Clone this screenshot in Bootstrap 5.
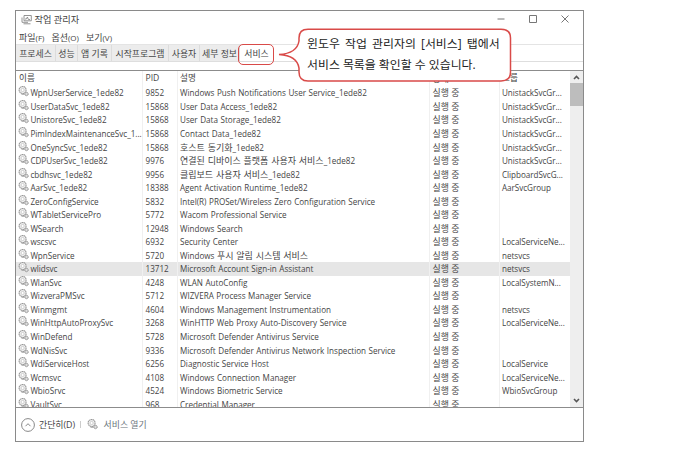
<!DOCTYPE html>
<html lang="ko">
<head>
<meta charset="utf-8">
<meta name="viewport" content="width=device-width, initial-scale=1">
<title>작업 관리자</title>
<link href="https://cdn.jsdelivr.net/npm/bootstrap@5.3.0/dist/css/bootstrap.min.css" rel="stylesheet">
<style>
body{font-family:"Open Sans","Noto Sans CJK KR",sans-serif;font-size:8.1px;line-height:13.54px;color:#444;height:455px}
.win{width:569px;height:432px;margin:10px 0 0 15px;border:1px solid #8a8a8a;white-space:nowrap}
.titlebar{height:17px;padding:0 13px 0 5px;font-size:9.2px}
.winbtns{gap:22px}
.menus{height:16px;padding:3px 0 0 3px;gap:7px;font-size:9px;line-height:13px}
.menus small{font-size:8px}
.tabstrip{height:18px;border-top:1px solid #e4e4e4;border-bottom:1px solid #dedede;font-size:8.9px;line-height:17.5px}
.tabitem{background:#ececec;border-right:1px solid #dcdcdc;text-align:center}
.tabitem.current{background:#fff;border:0}
.svclist{margin-top:8px;height:340px;border-top:1px solid #8c8c8c;border-bottom:1px solid #8c8c8c}
.svcrow{display:grid;grid-template-columns:126.5px 35px 252px 70px 1fr;height:13.54px}
.svcrow>*{border-right:1px solid #f0f0f0;padding-left:3px;overflow:hidden;height:13.54px}
.svcrow>*:last-child{border:0;padding-left:2.5px;letter-spacing:-.03px}
.svcrow.head{height:15.5px}
.svcrow.head>*{height:15.5px;line-height:15.5px;font-size:8.6px}
.svcrow.picked{background:#e6e6e6}
.svcrow:not(.head)>:first-child{display:flex;padding-left:2px}
.svcrow>:nth-child(3){word-spacing:.45px;padding-left:2.5px}
.svcrow>:nth-child(4){font-size:8.9px}
.hangul{font-size:9px;line-height:1}
.gear{width:11px;height:11px;flex:none;margin-right:1.4px}
.sbar{width:13px;background:#eee}
.thumb{height:23px;background:#bdbdbd}
.foot{height:33px;padding:0 0 0 5px;font-size:8.9px}
.split{width:1px;height:7px;background:#ccc;margin:0 6px 0 5px}
.ring{left:238px;top:44px;width:36px;height:21px;border:1.5px solid #d94a48;border-radius:5px}
.bubble{left:277px;top:27px;width:236px;height:56px}
.bubble p{left:30px;top:6px;font-size:11.9px;line-height:20.6px;color:#222;white-space:nowrap}
.l1{word-spacing:2.1px}
</style>
<script src="https://cdn.jsdelivr.net/npm/bootstrap@5.3.0/dist/js/bootstrap.bundle.min.js"></script>
</head>
<body class="bg-white overflow-hidden position-relative">
<svg class="d-none">
<symbol id="g" viewBox="0 0 11 11"><circle cx="4.6" cy="4" r="3.5" fill="#f3f3f3" stroke="#999" stroke-width="1.1" stroke-dasharray="1.5 .4"/><circle cx="4.6" cy="4" r="1.6" fill="#fff" stroke="#bbb" stroke-width=".7"/><circle cx="8.5" cy="8" r="1.7" fill="#ddd" stroke="#888" stroke-width="1" stroke-dasharray="1 .3"/><path d="M3.5 8.2h2.8" stroke="#999"/></symbol>
</svg>
<main class="win d-flex flex-column overflow-hidden">
<header class="titlebar d-flex align-items-center">
<svg width="11" height="11" viewBox="0 0 11 11" fill="none" stroke="#888" stroke-width=".9"><path d="M3 1.5h7.3v5.3H3zM1 3.5v4.8h6M2.5 9.8h7M4 5h1.4l1-2 1 2.5H9"/></svg>
<span style="margin-left:2.5px">작업 관리자</span>
<span class="winbtns d-flex ms-auto">
<svg width="10" height="10" stroke="#777"><path d="M1.500 5h7"/></svg>
<svg width="10" height="10" stroke="#777" fill="none"><path d="M1.5 1.5h7v7h-7z"/></svg>
<svg width="10" height="10" stroke="#777"><path d="M1.5 1.5l7 7m0-7l-7 7"/></svg>
</span>
</header>
<nav class="menus d-flex"><span>파일<small>(F)</small></span><span>옵션<small>(O)</small></span><span>보기<small>(V)</small></span></nav>
<nav class="tabstrip d-flex">
<span class="tabitem" style="width:40px">프로세스</span><span class="tabitem" style="width:22px">성능</span><span class="tabitem" style="width:34px">앱 기록</span><span class="tabitem" style="width:57px">시작프로그램</span><span class="tabitem" style="width:31px">사용자</span><span class="tabitem" style="width:40px">세부 정보</span><span class="tabitem current" style="width:33px">서비스</span>
</nav>
<section class="svclist d-flex overflow-hidden">
<div class="flex-grow-1">
<div class="svcrow head"><span>이름</span><span>PID</span><span>설명</span><span>상태</span><span>그룹</span></div>
<div class="svcrow"><span><svg class="gear"><use href="#g"/></svg>WpnUserService_1ede82</span><span>9852</span><span>Windows Push Notifications User Service_1ede82</span><span>실행 중</span><span>UnistackSvcGr...</span></div>
<div class="svcrow"><span><svg class="gear"><use href="#g"/></svg>UserDataSvc_1ede82</span><span>15868</span><span>User Data Access_1ede82</span><span>실행 중</span><span>UnistackSvcGr...</span></div>
<div class="svcrow"><span><svg class="gear"><use href="#g"/></svg>UnistoreSvc_1ede82</span><span>15868</span><span>User Data Storage_1ede82</span><span>실행 중</span><span>UnistackSvcGr...</span></div>
<div class="svcrow"><span><svg class="gear"><use href="#g"/></svg>PimIndexMaintenanceSvc_1...</span><span>15868</span><span>Contact Data_1ede82</span><span>실행 중</span><span>UnistackSvcGr...</span></div>
<div class="svcrow"><span><svg class="gear"><use href="#g"/></svg>OneSyncSvc_1ede82</span><span>15868</span><span><span class="hangul">호스트 동기화</span>_1ede82</span><span>실행 중</span><span>UnistackSvcGr...</span></div>
<div class="svcrow"><span><svg class="gear"><use href="#g"/></svg>CDPUserSvc_1ede82</span><span>9976</span><span><span class="hangul">연결된 디바이스 플랫폼 사용자 서비스</span>_1ede82</span><span>실행 중</span><span>UnistackSvcGr...</span></div>
<div class="svcrow"><span><svg class="gear"><use href="#g"/></svg>cbdhsvc_1ede82</span><span>9956</span><span><span class="hangul">클립보드 사용자 서비스</span>_1ede82</span><span>실행 중</span><span>ClipboardSvcG...</span></div>
<div class="svcrow"><span><svg class="gear"><use href="#g"/></svg>AarSvc_1ede82</span><span>18388</span><span>Agent Activation Runtime_1ede82</span><span>실행 중</span><span>AarSvcGroup</span></div>
<div class="svcrow"><span><svg class="gear"><use href="#g"/></svg>ZeroConfigService</span><span>5832</span><span>Intel(R) PROSet/Wireless Zero Configuration Service</span><span>실행 중</span><span></span></div>
<div class="svcrow"><span><svg class="gear"><use href="#g"/></svg>WTabletServicePro</span><span>5772</span><span>Wacom Professional Service</span><span>실행 중</span><span></span></div>
<div class="svcrow"><span><svg class="gear"><use href="#g"/></svg>WSearch</span><span>12948</span><span>Windows Search</span><span>실행 중</span><span></span></div>
<div class="svcrow"><span><svg class="gear"><use href="#g"/></svg>wscsvc</span><span>6932</span><span>Security Center</span><span>실행 중</span><span>LocalServiceNe...</span></div>
<div class="svcrow"><span><svg class="gear"><use href="#g"/></svg>WpnService</span><span>5720</span><span>Windows <span class="hangul">푸시 알림 시스템 서비스</span></span><span>실행 중</span><span>netsvcs</span></div>
<div class="svcrow picked"><span><svg class="gear"><use href="#g"/></svg>wlidsvc</span><span>13712</span><span>Microsoft Account Sign-in Assistant</span><span>실행 중</span><span>netsvcs</span></div>
<div class="svcrow"><span><svg class="gear"><use href="#g"/></svg>WlanSvc</span><span>4248</span><span>WLAN AutoConfig</span><span>실행 중</span><span>LocalSystemN...</span></div>
<div class="svcrow"><span><svg class="gear"><use href="#g"/></svg>WizveraPMSvc</span><span>5712</span><span>WIZVERA Process Manager Service</span><span>실행 중</span><span></span></div>
<div class="svcrow"><span><svg class="gear"><use href="#g"/></svg>Winmgmt</span><span>4604</span><span>Windows Management Instrumentation</span><span>실행 중</span><span>netsvcs</span></div>
<div class="svcrow"><span><svg class="gear"><use href="#g"/></svg>WinHttpAutoProxySvc</span><span>3268</span><span>WinHTTP Web Proxy Auto-Discovery Service</span><span>실행 중</span><span>LocalServiceNe...</span></div>
<div class="svcrow"><span><svg class="gear"><use href="#g"/></svg>WinDefend</span><span>5728</span><span>Microsoft Defender Antivirus Service</span><span>실행 중</span><span></span></div>
<div class="svcrow"><span><svg class="gear"><use href="#g"/></svg>WdNisSvc</span><span>9336</span><span>Microsoft Defender Antivirus Network Inspection Service</span><span>실행 중</span><span></span></div>
<div class="svcrow"><span><svg class="gear"><use href="#g"/></svg>WdiServiceHost</span><span>6256</span><span>Diagnostic Service Host</span><span>실행 중</span><span>LocalService</span></div>
<div class="svcrow"><span><svg class="gear"><use href="#g"/></svg>Wcmsvc</span><span>4108</span><span>Windows Connection Manager</span><span>실행 중</span><span>LocalServiceNe...</span></div>
<div class="svcrow"><span><svg class="gear"><use href="#g"/></svg>WbioSrvc</span><span>4524</span><span>Windows Biometric Service</span><span>실행 중</span><span>WbioSvcGroup</span></div>
<div class="svcrow"><span><svg class="gear"><use href="#g"/></svg>VaultSvc</span><span>968</span><span>Credential Manager</span><span>실행 중</span><span></span></div>
</div>
<div class="sbar d-flex flex-column">
<svg width="13" height="12" fill="none" stroke="#555" stroke-width="1.6"><path d="M4 8l2.5-2.5L9 8"/></svg>
<div class="thumb"></div>
<svg class="mt-auto" width="13" height="12" fill="none" stroke="#555" stroke-width="1.6"><path d="M4 4l2.5 2.5L9 4"/></svg>
</div>
</section>
<footer class="foot d-flex align-items-center">
<svg width="14" height="14" fill="none" stroke="#888" class="me-1"><circle cx="7" cy="7" r="6.4"/><path d="M4.5 8.2L7 5.7l2.5 2.5"/></svg>
<span>간단히(D)</span><span class="split"></span><svg class="gear"><use href="#g"/></svg><span class="text-secondary ms-1">서비스 열기</span>
</footer>
</main>
<div class="ring position-absolute"></div>
<div class="bubble position-absolute">
<svg width="236" height="56"><path d="M31 2.3H224Q233.500 2.300 233.500 11V45Q233.500 54 224 54H31Q22 54 22 45V41Q20 28.500 2 27.500Q20 26.500 22 14V11Q22 2.300 31 2.300Z" fill="#fff" stroke="#d94a48" stroke-width="1.5"/></svg>
<p class="position-absolute m-0"><span class="l1">윈도우 작업 관리자의 [서비스] 탭에서</span><br><span class="l2">서비스 목록을 확인할 수 있습니다.</span></p>
</div>
</body>
</html>
